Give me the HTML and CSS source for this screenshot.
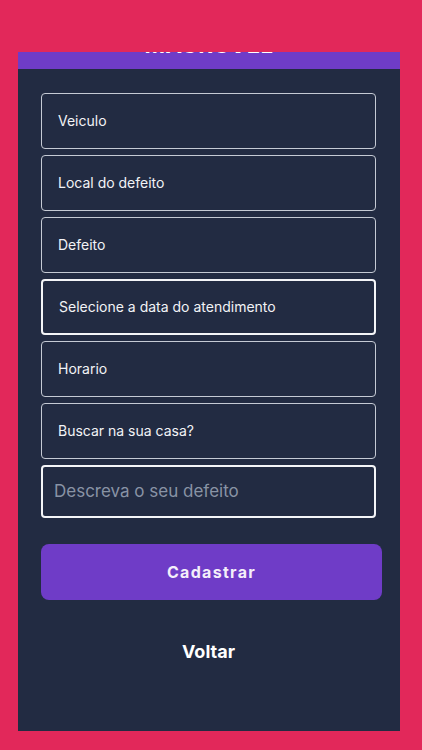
FILE: index.html
```html
<!DOCTYPE html>
<html lang="pt">
<head>
    <meta charset="utf-8">
    <title>Agendamento</title>
    <link rel="stylesheet" href="styles.css">
</head>
<body>
    <div class="screen">
        <div class="header">
            <h1 class="header-title">MACROVEL</h1>
        </div>
        <div class="form">
            <div class="field-list">
                <div class="field">Veiculo</div>
                <div class="field">Local do defeito</div>
                <div class="field">Defeito</div>
                <div class="field field--active">Selecione a data do atendimento</div>
                <div class="field">Horario</div>
                <div class="field">Buscar na sua casa?</div>
                <input type="text" class="field field--input field--active" placeholder="Descreva o seu defeito">
            </div>
            <button class="btn">Cadastrar</button>
            <div class="back-link">Voltar</div>
        </div>
    </div>
</body>
</html>
```

FILE: styles.css
```css
:root {
    --pink: #e2285a;
    --dark: #222b42;
    --purple: #6f3cc7;
    --border-radius: 4px;
}

body {
    margin: 0;
    background-color: var(--pink);
    font-family: Inter, "Noto Sans", sans-serif;
}

.screen {
    width: 382px;
    height: 679px;
    margin: 52px 0 0 18px;
    background-color: var(--dark);
}

.header {
    height: 17px;
    overflow: hidden;
    background-color: var(--purple);
    text-align: center;
}

.header-title {
    margin: -18px 0 0;
    color: #ffffff;
    font-size: 22px;
    line-height: 22px;
    font-weight: 700;
    letter-spacing: 0.5px;
}

.form {
    padding: 24px 18px 0 23px;
}

.field-list {
    display: flex;
    flex-direction: column;
    gap: 6px;
    width: 335px;
}

.field {
    box-sizing: border-box;
    height: 56px;
    display: flex;
    align-items: center;
    padding: 0 16px 2px;
    border: 1.5px solid #c5cad4;
    border-radius: var(--border-radius);
    color: #f2f3f6;
    font-size: 14px;
}

.field--active {
    border: 2px solid #f4f5f8;
}

.field--input {
    width: 100%;
    height: 53px;
    margin: 0;
    padding: 0 11px 2px;
    background-color: transparent;
    font-family: inherit;
    font-size: 17px;
    outline: none;
}

.field--input::placeholder {
    color: #8993a5;
}

.btn {
    display: block;
    width: 341px;
    height: 56px;
    margin-top: 26px;
    border: none;
    border-radius: 8px;
    background-color: var(--purple);
    color: #f4effa;
    font-family: inherit;
    font-size: 16px;
    font-weight: 700;
    letter-spacing: 1.3px;
}

.back-link {
    margin-top: 41px;
    width: 335px;
    text-align: center;
    color: #ffffff;
    font-size: 18px;
    font-weight: 700;
}
```
